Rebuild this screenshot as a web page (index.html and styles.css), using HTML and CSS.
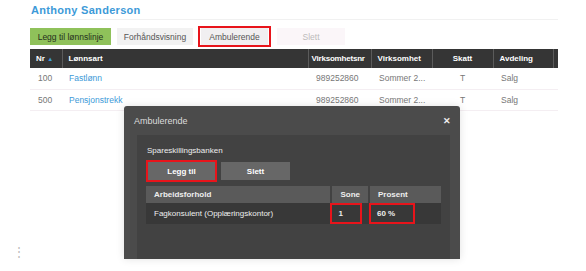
FILE: index.html
```html
<!DOCTYPE html>
<html lang="no">
<head>
    <meta charset="UTF-8">
    <title>Anthony Sanderson</title>
    <link rel="stylesheet" href="styles.css">
</head>
<body>
    <div class="page">
        <h1 class="person-name">Anthony Sanderson</h1>

        <div class="toolbar">
            <button class="btn btn-green">Legg til lønnslinje</button>
            <button class="btn btn-light">Forhåndsvisning</button>
            <span class="mark mark-top"><button class="btn btn-light btn-amb">Ambulerende</button></span>
            <button class="btn btn-faint">Slett</button>
        </div>

        <table class="lines">
            <colgroup>
                <col style="width:32px">
                <col style="width:246px">
                <col style="width:63px">
                <col style="width:61px">
                <col style="width:61px">
                <col style="width:60px">
                <col style="width:5px">
            </colgroup>
            <thead>
                <tr>
                    <th>Nr <span class="sort">▲</span></th>
                    <th>Lønnsart</th>
                    <th class="tight">Virksomhetsnr</th>
                    <th>Virksomhet</th>
                    <th class="center">Skatt</th>
                    <th>Avdeling</th>
                    <th></th>
                </tr>
            </thead>
            <tbody>
                <tr>
                    <td>100</td>
                    <td><a class="link">Fastlønn</a></td>
                    <td>989252860</td>
                    <td>Sommer 2...</td>
                    <td class="center">T</td>
                    <td>Salg</td>
                    <td></td>
                </tr>
                <tr>
                    <td>500</td>
                    <td><a class="link">Pensjonstrekk</a></td>
                    <td>989252860</td>
                    <td>Sommer 2...</td>
                    <td class="center">T</td>
                    <td>Salg</td>
                    <td></td>
                </tr>
            </tbody>
        </table>

        <div class="grip">⋮</div>
    </div>

    <div class="modal">
        <div class="modal-head">
            <span class="modal-title">Ambulerende</span>
            <span class="modal-close">✕</span>
        </div>
        <div class="modal-body">
            <div class="bank-name">Spareskillingsbanken</div>
            <div class="modal-actions">
                <span class="mark mark-add"><button class="btn btn-dark">Legg til</button></span>
                <button class="btn btn-dark">Slett</button>
            </div>
            <table class="work">
                <thead>
                    <tr>
                        <th class="w-name">Arbeidsforhold</th>
                        <th class="w-zone">Sone</th>
                        <th class="w-pct">Prosent</th>
                    </tr>
                </thead>
                <tbody>
                    <tr>
                        <td>Fagkonsulent (Opplæringskontor)</td>
                        <td class="cell-mark"><span class="box box-zone">1</span></td>
                        <td class="cell-mark"><span class="box box-pct">60 %</span></td>
                    </tr>
                </tbody>
            </table>
        </div>
    </div>
</body>
</html>
```

FILE: styles.css
```css
* {
    margin: 0;
    padding: 0;
    box-sizing: border-box;
}

body {
    font-family: 'Liberation Sans', Arial, sans-serif;
    background: white;
    color: #666;
    width: 586px;
    height: 271px;
    overflow: hidden;
    position: relative;
}

.page {
    padding: 4px 28px 0 30px;
}

.person-name {
    font-size: 11px;
    font-weight: bold;
    color: #3d9ad8;
    letter-spacing: 0.3px;
    padding: 0 0 3px 1px;
    border-bottom: 1px solid #f1f1f1;
    line-height: 12px;
}

.toolbar {
    display: flex;
    align-items: center;
    margin-top: 6px;
    height: 21px;
}

.btn {
    font-family: inherit;
    font-size: 8.5px;
    border: none;
    height: 17px;
    color: #444;
    background: #eee;
}

.btn-green {
    width: 81px;
    background: #8fc15a;
    color: #26301c;
}

.btn-light {
    width: 76px;
    margin-left: 6px;
    background: #f2f2f2;
    color: #555;
}

.mark {
    display: inline-flex;
    border: 2px solid #e8141b;
}

.mark-top {
    margin-left: 5px;
    padding: 0 1px;
    height: 21px;
    align-items: center;
}

.btn-amb {
    width: 67px;
    margin-left: 0;
    background: #f1eff1;
}

.btn-faint {
    width: 68px;
    margin-left: 6px;
    background: #fbf6f9;
    color: #bbb;
}

.lines {
    border-collapse: collapse;
    table-layout: fixed;
    width: 528px;
    margin-top: 2px;
    font-size: 8.5px;
}

.lines th {
    background: #353535;
    color: #fff;
    font-weight: bold;
    font-size: 8px;
    text-align: left;
    height: 19px;
    padding: 0 6px;
    border-left: 1px solid #5b5b5b;
    white-space: nowrap;
    overflow: hidden;
}

.lines th.tight {
    padding: 0 0 0 3px;
    letter-spacing: -0.2px;
}

.lines th:first-child {
    border-left: none;
}

.lines td {
    height: 21px;
    padding: 0 8px;
    border-bottom: 1px solid #f4eef2;
    white-space: nowrap;
    color: #777;
}

.lines td:nth-child(2) {
    padding-left: 7px;
}

.lines .center {
    text-align: center;
}

.sort {
    color: #3d9ad8;
    font-size: 6px;
}

.link {
    color: #3d9ad8;
}

.grip {
    position: absolute;
    left: 13px;
    top: 245px;
    color: #bbb;
    font-size: 12px;
}

/* modal dialog */
.modal {
    position: absolute;
    left: 124px;
    top: 106px;
    width: 336px;
    height: 153px;
    background: #4b4b4b;
    border-radius: 3px 3px 0 0;
    box-shadow: 0 0 8px rgba(0,0,0,0.12);
    padding: 0 10px 0 13px;
}

.modal-head {
    display: flex;
    justify-content: space-between;
    align-items: center;
    height: 29px;
}

.modal-title {
    font-size: 9px;
    color: #ddd;
    margin-left: -3px;
}

.modal-close {
    font-size: 9px;
    color: #eee;
    font-weight: bold;
    margin-right: -1px;
}

.modal-body {
    background: #424242;
    height: 124px;
    padding: 11px 9px 0 9px;
}

.bank-name {
    font-size: 8px;
    color: #eee;
    margin-left: 1px;
    line-height: 10px;
}

.modal-actions {
    display: flex;
    align-items: center;
    gap: 4px;
    margin-top: 4px;
}

.btn-dark {
    width: 69px;
    height: 18px;
    background: #676767;
    color: #fff;
    font-weight: bold;
    font-size: 8px;
}

.mark-add .btn-dark {
    width: 67px;
}

.work {
    border-collapse: separate;
    border-spacing: 0;
    width: 295px;
    margin-top: 4px;
    font-size: 8px;
    color: #eee;
}

.work th {
    background: #5a5a5a;
    height: 17px;
    text-align: left;
    font-weight: bold;
    padding: 0 8px;
    border-left: 2px solid #424242;
}

.work th:first-child {
    border-left: none;
}

.work .w-zone {
    width: 37px;
    text-align: center;
}

.work .w-pct {
    width: 73px;
}

.work td {
    background: #383838;
    height: 21px;
    padding: 0 8px;
}

.work td.cell-mark {
    padding: 0;
}

.box {
    display: inline-flex;
    align-items: center;
    border: 2px solid #e8141b;
    height: 21px;
    font-weight: bold;
    padding-left: 6px;
}

.box-zone {
    width: 32px;
}

.box-pct {
    width: 46px;
    margin-left: 1px;
}
```
